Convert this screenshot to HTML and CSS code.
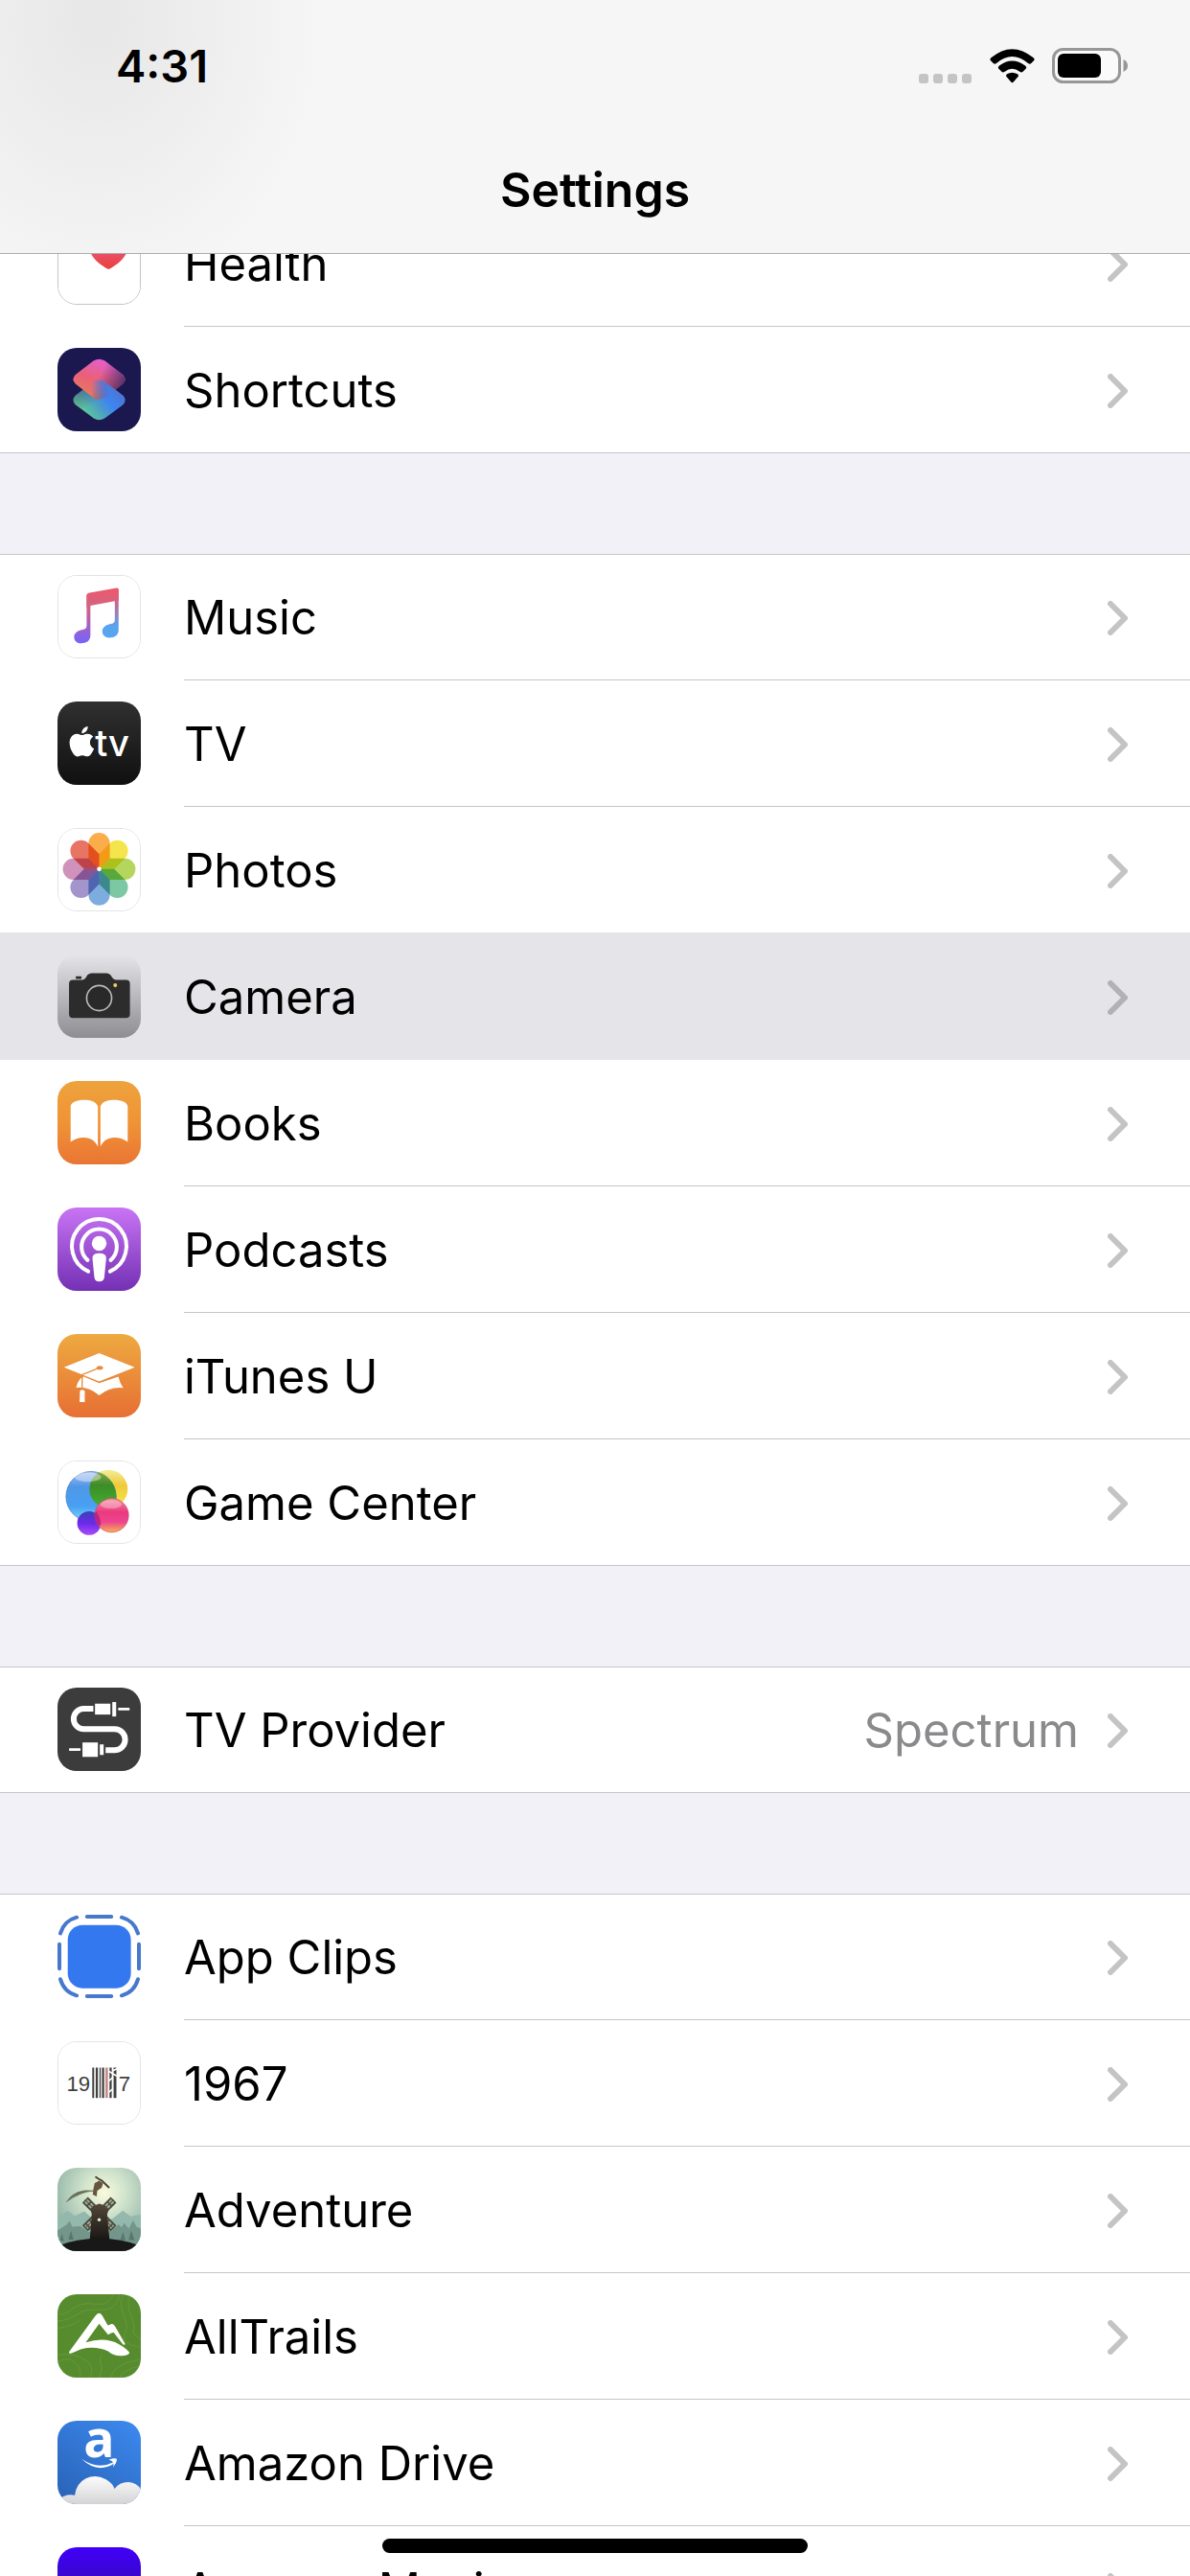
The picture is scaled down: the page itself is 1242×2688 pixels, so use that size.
FILE: index.html
```html
<!DOCTYPE html>
<html lang="en">
<head>
  <meta charset="UTF-8">
  <meta name="viewport" content="width=device-width, initial-scale=1">
  <title>Settings</title>
  <link rel="stylesheet" href="styles.css">
</head>
<body>

  <svg class="defs" aria-hidden="true">
    <symbol id="chevron" viewBox="0 0 21 36">
      <path d="M3 3 L18 18 L3 33" fill="none" stroke="currentColor" stroke-width="6" stroke-linecap="round" stroke-linejoin="round"/>
    </symbol>
  </svg>

  <header class="top">
    <div class="status">
      <span class="time">4:31</span>
      <div class="status-icons">
        <svg class="signal" viewBox="0 0 56 10" aria-hidden="true">
          <g fill="#c4c4c4">
            <rect x="0" width="10" height="10" rx="3"/>
            <rect x="15" width="10" height="10" rx="3"/>
            <rect x="30" width="10" height="10" rx="3"/>
            <rect x="45" width="10" height="10" rx="3"/>
          </g>
        </svg>
        <svg class="wifi" viewBox="0 0 141 108" aria-hidden="true">
          <path d="M4 28 Q70 -27 137 28 Q142 33 138 37 L129 46 Q125 49 120 45 Q70 3 21 45 Q16 49 12 46 L3 37 Q-1 33 4 28Z"/>
          <path d="M29 53 Q70 22 112 53 Q117 58 113 62 L103 72 Q99 75 94 71 Q70 53 47 71 Q42 75 38 72 L28 62 Q24 58 29 53Z"/>
          <path d="M54 79 Q70 69 87 79 Q92 83 88 88 L75 103 Q70 109 66 103 L53 88 Q49 83 54 79Z"/>
        </svg>
        <svg class="battery" viewBox="0 0 79 37" aria-hidden="true">
          <rect x="1.500" y="1.500" width="69" height="34" rx="10" fill="#fafafa" stroke="#979797" stroke-width="3"/>
          <rect x="6" y="6" width="45" height="25" rx="6"/>
          <path d="M74.500 12 Q79 14 79 18.500 Q79 23 74.500 25Z" fill="#979797"/>
        </svg>
      </div>
    </div>
    <h1 class="title">Settings</h1>
  </header>

  <main class="settings">
    <ul class="group first">
      <li><a class="row" href="#health">
        <svg class="icon outlined dark-line" viewBox="0 0 260 260" aria-hidden="true">
          <defs><linearGradient id="heart" x2="0" y2="1"><stop stop-color="#f0609a"/><stop offset="1" stop-color="#e8403a"/></linearGradient></defs>
          <rect width="260" height="260" fill="#fff"/>
          <path d="M160 150 C120 130 96 100 96 70 C96 36 140 28 160 58 C180 28 224 36 224 70 C224 100 200 130 160 150Z" fill="url(#heart)"/>
        </svg>
        <span class="body"><span class="name">Health</span><svg class="chevron"><use href="#chevron"/></svg></span>
      </a></li>
      <li><a class="row" href="#shortcuts">
        <svg class="icon" viewBox="0 0 260 260" aria-hidden="true">
          <defs>
            <linearGradient id="sc-low" gradientUnits="userSpaceOnUse" x1="80" y1="210" x2="180" y2="130"><stop stop-color="#62cf90"/><stop offset="0.450" stop-color="#4a9cc8"/><stop offset="0.700" stop-color="#3d84f2"/><stop offset="1" stop-color="#4a78d8"/></linearGradient>
            <linearGradient id="sc-shade" x1="0" y1="0" x2="0.400" y2="0.600"><stop stop-color="#44506e" stop-opacity="0.900"/><stop offset="1" stop-color="#44506e" stop-opacity="0"/></linearGradient>
            <linearGradient id="sc-high" gradientUnits="userSpaceOnUse" x1="140" y1="35" x2="100" y2="150"><stop stop-color="#e35fd0"/><stop offset="0.550" stop-color="#ea6078"/><stop offset="1" stop-color="#e87860"/></linearGradient>
            <linearGradient id="sc-dark" gradientUnits="userSpaceOnUse" x1="135" y1="80" x2="205" y2="115"><stop stop-color="#4a2c66" stop-opacity="0"/><stop offset="1" stop-color="#4a2c66" stop-opacity="0.900"/></linearGradient>
            <linearGradient id="sc-fade" gradientUnits="userSpaceOnUse" x1="105" y1="140" x2="160" y2="130"><stop stop-color="#000"/><stop offset="1" stop-color="#fff"/></linearGradient>
            <mask id="sc-mask" maskUnits="userSpaceOnUse" x="0" y="0" width="260" height="260"><rect width="260" height="260" fill="url(#sc-fade)"/></mask>
          </defs>
          <rect width="260" height="260" fill="#1b1850"/>
          <path d="M112 105 Q130 95 148 105 L204 149 Q218 163 204 177 L148 219 Q130 231 112 219 L56 177 Q42 163 56 149Z" fill="url(#sc-low)"/>
          <path d="M112 105 Q130 95 148 105 L204 149 Q218 163 204 177 L148 219 Q130 231 112 219 L56 177 Q42 163 56 149Z" fill="url(#sc-shade)"/>
          <path d="M112 40 Q130 30 148 40 L204 84 Q218 98 204 112 L148 156 Q130 166 112 156 L56 112 Q42 98 56 84Z" fill="url(#sc-high)"/>
          <path d="M112 40 Q130 30 148 40 L204 84 Q218 98 204 112 L148 156 Q130 166 112 156 L56 112 Q42 98 56 84Z" fill="url(#sc-dark)"/>
          <path d="M112 105 Q130 95 148 105 L204 149 Q218 163 204 177 L148 219 L130 162 L100 140Z" fill="url(#sc-low)" mask="url(#sc-mask)"/>
        </svg>
        <span class="body"><span class="name">Shortcuts</span><svg class="chevron"><use href="#chevron"/></svg></span>
      </a></li>
    </ul>

    <ul class="group">
      <li><a class="row" href="#music">
        <svg class="icon outlined" viewBox="0 0 260 260" aria-hidden="true">
          <defs>
            <linearGradient id="note-l" gradientUnits="userSpaceOnUse" x1="0" y1="50" x2="0" y2="215"><stop stop-color="#f0586c"/><stop offset="0.300" stop-color="#d8607f"/><stop offset="1" stop-color="#7463ff"/></linearGradient>
            <linearGradient id="note-r" gradientUnits="userSpaceOnUse" x1="0" y1="40" x2="0" y2="190"><stop stop-color="#f0586c"/><stop offset="0.300" stop-color="#c8688f"/><stop offset="0.800" stop-color="#58a4ee"/></linearGradient>
            <linearGradient id="note-beam" x2="0" y2="1"><stop stop-color="#f0566a"/><stop offset="1" stop-color="#cf6684"/></linearGradient>
          </defs>
          <rect width="260" height="260" fill="#fff"/>
          <path d="M90 60 H102 V190 C102 207 90 215 72 215 C58 215 50 206 50 195 C50 183 60 175 74 172 C84 170 90 168 90 158Z" fill="url(#note-l)"/>
          <path d="M180 42 H192 V172 C192 189 180 197 162 197 C148 197 140 188 140 177 C140 165 150 157 164 154 C174 152 180 150 180 140Z" fill="url(#note-r)"/>
          <path d="M90 61 Q90 56 96 54 L186 38 Q192 37 192 43 V78 L102 95 L90 100Z" fill="url(#note-beam)"/>
        </svg>
        <span class="body"><span class="name">Music</span><svg class="chevron"><use href="#chevron"/></svg></span>
      </a></li>
      <li><a class="row" href="#tv">
        <svg class="icon" viewBox="0 0 260 260" aria-hidden="true">
          <defs><linearGradient id="tv-bg" x2="0" y2="1"><stop stop-color="#303030"/><stop offset="1" stop-color="#101010"/></linearGradient></defs>
          <rect width="260" height="260" fill="url(#tv-bg)"/>
          <path transform="translate(29 78) scale(3.900)" fill="#fff" d="M12.152 6.896c-.948 0-2.415-1.078-3.960-1.040-2.040.027-3.910 1.183-4.961 3.014-2.117 3.675-.546 9.103 1.519 12.090 1.013 1.454 2.208 3.090 3.792 3.039 1.520-.065 2.090-.987 3.935-.987 1.831 0 2.350.987 3.960.948 1.637-.026 2.676-1.480 3.676-2.948 1.156-1.688 1.636-3.325 1.662-3.415-.039-.013-3.182-1.221-3.220-4.857-.026-3.040 2.480-4.494 2.597-4.559-1.429-2.090-3.623-2.324-4.390-2.376-2-.156-3.675 1.090-4.610 1.090zM15.530 3.830c.843-1.012 1.400-2.427 1.245-3.830-1.207.052-2.662.805-3.532 1.818-.780.896-1.454 2.338-1.273 3.714 1.338.104 2.715-.688 3.559-1.701"/>
          <text class="tv-text" x="117" y="171">tv</text>
        </svg>
        <span class="body"><span class="name">TV</span><svg class="chevron"><use href="#chevron"/></svg></span>
      </a></li>
      <li><a class="row" href="#photos">
        <svg class="icon outlined" viewBox="0 0 260 260" aria-hidden="true">
          <rect width="260" height="260" fill="#fff"/>
          <g class="petals">
            <path d="M96 46 A34 34 0 0 1 164 46 V94 L130 128 L96 94Z" fill="#fbad4c"/>
            <path transform="rotate(45 130 128)" d="M96 46 A34 34 0 0 1 164 46 V94 L130 128 L96 94Z" fill="#f5e54c"/>
            <path transform="rotate(90 130 128)" d="M96 46 A34 34 0 0 1 164 46 V94 L130 128 L96 94Z" fill="#b4d65c"/>
            <path transform="rotate(135 130 128)" d="M96 46 A34 34 0 0 1 164 46 V94 L130 128 L96 94Z" fill="#7cc8a2"/>
            <path transform="rotate(180 130 128)" d="M96 46 A34 34 0 0 1 164 46 V94 L130 128 L96 94Z" fill="#7cadde"/>
            <path transform="rotate(225 130 128)" d="M96 46 A34 34 0 0 1 164 46 V94 L130 128 L96 94Z" fill="#a395cc"/>
            <path transform="rotate(270 130 128)" d="M96 46 A34 34 0 0 1 164 46 V94 L130 128 L96 94Z" fill="#d092ba"/>
            <path transform="rotate(315 130 128)" d="M96 46 A34 34 0 0 1 164 46 V94 L130 128 L96 94Z" fill="#e87464"/>
          </g>
          <circle cx="130" cy="128" r="7" fill="#fff"/>
        </svg>
        <span class="body"><span class="name">Photos</span><svg class="chevron"><use href="#chevron"/></svg></span>
      </a></li>
      <li><a class="row selected" href="#camera">
        <svg class="icon" viewBox="0 0 260 260" aria-hidden="true">
          <defs><linearGradient id="cam-bg" x2="0" y2="1"><stop stop-color="#e5e5e9"/><stop offset="1" stop-color="#8e8d92"/></linearGradient></defs>
          <rect width="260" height="260" fill="url(#cam-bg)"/>
          <rect x="57" y="68" width="18" height="8" rx="2" fill="#2c2c2d"/>
          <path d="M48 79 H76 Q86 79 91 68 Q96 58 106 58 H154 Q163 58 168 68 Q174 79 184 79 H214 Q226 79 226 91 V186 Q226 198 214 198 H48 Q36 198 36 186 V91 Q36 79 48 79Z" fill="#2c2c2d"/>
          <circle cx="130" cy="136" r="39" fill="#29292a" stroke="#b9b9ba" stroke-width="5"/>
          <circle cx="180" cy="96" r="6" fill="#f2c764"/>
        </svg>
        <span class="body"><span class="name">Camera</span><svg class="chevron"><use href="#chevron"/></svg></span>
      </a></li>
      <li><a class="row" href="#books">
        <svg class="icon" viewBox="0 0 260 260" aria-hidden="true">
          <defs><linearGradient id="books-bg" x2="0" y2="1"><stop stop-color="#eda33c"/><stop offset="0.500" stop-color="#f09336"/><stop offset="1" stop-color="#e97534"/></linearGradient></defs>
          <rect width="260" height="260" fill="url(#books-bg)"/>
          <g fill="#fff">
            <path d="M126 79 C120 64 103 59 83 59 C62 59 41 66 41 80 V190 C54 179 68 176 82 176 C103 176 119 187 126 205Z"/>
            <path d="M134 79 C140 64 157 59 177 59 C198 59 219 66 219 80 V190 C206 179 192 176 178 176 C157 176 141 187 134 205Z"/>
          </g>
        </svg>
        <span class="body"><span class="name">Books</span><svg class="chevron"><use href="#chevron"/></svg></span>
      </a></li>
      <li><a class="row" href="#podcasts">
        <svg class="icon" viewBox="0 0 260 260" aria-hidden="true">
          <defs><linearGradient id="pod-bg" x2="0" y2="1"><stop stop-color="#c874f4"/><stop offset="1" stop-color="#7430b4"/></linearGradient></defs>
          <rect width="260" height="260" fill="url(#pod-bg)"/>
          <g fill="none" stroke="#fff" stroke-width="12" stroke-linecap="round">
            <path d="M96 199 A85 85 0 1 1 164 199"/>
            <path d="M94 164 A55 55 0 1 1 166 164"/>
          </g>
          <circle cx="130" cy="112" r="23" fill="#fff"/>
          <path d="M109 158 Q109 143 130 143 Q152 143 152 158 L146 218 Q144 231 130 231 Q117 231 115 218Z" fill="#fff"/>
        </svg>
        <span class="body"><span class="name">Podcasts</span><svg class="chevron"><use href="#chevron"/></svg></span>
      </a></li>
      <li><a class="row" href="#itunes-u">
        <svg class="icon" viewBox="0 0 260 260" aria-hidden="true">
          <defs><linearGradient id="itu-bg" x2="0" y2="1"><stop stop-color="#eeaa40"/><stop offset="1" stop-color="#e76f34"/></linearGradient></defs>
          <rect width="260" height="260" fill="url(#itu-bg)"/>
          <path d="M20 104 L130 60 L241 104 L130 148Z" fill="#fff"/>
          <path d="M72 138 L82 133 L130 153 L190 133 Q194 153 205 168 Q165 163 130 191 Q98 163 58 167 Q62 150 72 138Z" fill="#fff"/>
          <path d="M132 105 L77 127 V174" fill="none" stroke="#e58c3a" stroke-width="4"/>
          <ellipse cx="132" cy="105" rx="10" ry="6" fill="#e58c3a"/>
          <path d="M70 178 Q77 170 85 178 V212 H69Z" fill="#fff"/>
        </svg>
        <span class="body"><span class="name">iTunes U</span><svg class="chevron"><use href="#chevron"/></svg></span>
      </a></li>
      <li><a class="row" href="#game-center">
        <svg class="icon outlined" viewBox="0 0 260 260" aria-hidden="true">
          <defs>
            <linearGradient id="gc-blue" x2="0" y2="1"><stop stop-color="#a9bff0"/><stop offset="0.300" stop-color="#4f97e6"/><stop offset="0.700" stop-color="#48a0f4"/><stop offset="1" stop-color="#7fdcf5"/></linearGradient>
            <linearGradient id="gc-yellow" x2="0" y2="1"><stop stop-color="#f3ee9a"/><stop offset="0.400" stop-color="#efc93a"/><stop offset="1" stop-color="#f6ea4e"/></linearGradient>
            <linearGradient id="gc-green" x2="0" y2="1"><stop stop-color="#8fae50"/><stop offset="0.400" stop-color="#3c8c28"/><stop offset="1" stop-color="#45b030"/></linearGradient>
            <linearGradient id="gc-pink" x2="0" y2="1"><stop stop-color="#f58fa0"/><stop offset="0.400" stop-color="#ea3a7e"/><stop offset="0.700" stop-color="#ee4590"/><stop offset="1" stop-color="#f6b44c"/></linearGradient>
            <linearGradient id="gc-purple" x2="0" y2="1"><stop stop-color="#3c40b8"/><stop offset="0.500" stop-color="#6a2ae8"/><stop offset="1" stop-color="#a94cf8"/></linearGradient>
            <clipPath id="gc-clip"><circle cx="104" cy="112" r="81"/></clipPath>
          </defs>
          <rect width="260" height="260" fill="#fff"/>
          <circle cx="160" cy="88" r="61" fill="url(#gc-yellow)"/>
          <circle cx="104" cy="112" r="80" fill="url(#gc-blue)" stroke="#3f78c0" stroke-width="2"/>
          <circle cx="160" cy="88" r="61" fill="url(#gc-green)" clip-path="url(#gc-clip)"/>
          <ellipse cx="94" cy="50" rx="42" ry="15" fill="#fff" opacity="0.400"/>
          <circle cx="98" cy="197" r="38" fill="url(#gc-purple)"/>
          <circle cx="170" cy="172" r="54" fill="url(#gc-pink)" stroke="#c84868" stroke-width="2"/>
          <ellipse cx="168" cy="137" rx="34" ry="14" fill="#fff" opacity="0.300"/>
          <path d="M128 207 Q110 183 119 158 Q133 172 136 203Z" fill="#a8187c" opacity="0.700"/>
        </svg>
        <span class="body"><span class="name">Game Center</span><svg class="chevron"><use href="#chevron"/></svg></span>
      </a></li>
    </ul>

    <ul class="group">
      <li><a class="row" href="#tv-provider">
        <svg class="icon" viewBox="0 0 260 260" aria-hidden="true">
          <rect width="260" height="260" fill="#3c3c3c"/>
          <path d="M112 66 H82 A31 31 0 0 0 82 129 H178 A32 32 0 0 1 178 195 H150" fill="none" stroke="#fff" stroke-width="18"/>
          <g fill="#fff">
            <rect x="117" y="50" width="48" height="34"/>
            <rect x="171" y="45" width="12" height="45"/>
            <rect x="189" y="63" width="36" height="8" rx="2"/>
            <rect x="78" y="171" width="48" height="45"/>
            <rect x="132" y="177" width="12" height="33"/>
            <rect x="36" y="189" width="36" height="8" rx="2"/>
          </g>
        </svg>
        <span class="body"><span class="name">TV Provider</span><span class="value">Spectrum</span><svg class="chevron"><use href="#chevron"/></svg></span>
      </a></li>
    </ul>

    <ul class="group">
      <li><a class="row" href="#app-clips">
        <svg class="icon square" viewBox="0 0 260 260" aria-hidden="true">
          <rect x="32" y="32" width="197" height="197" rx="46" fill="#3478f0"/>
          <g fill="none" stroke="#4678cc" stroke-width="12" stroke-linecap="round">
            <path d="M92 6 H168 M92 254 H168 M6 92 V168 M254 92 V168"/>
            <path d="M9 58 Q20 19 60 8 M200 8 Q240 19 251 58 M251 201 Q240 241 200 252 M60 252 Q20 241 9 201"/>
          </g>
        </svg>
        <span class="body"><span class="name">App Clips</span><svg class="chevron"><use href="#chevron"/></svg></span>
      </a></li>
      <li><a class="row" href="#1967">
        <svg class="icon outlined" viewBox="0 0 260 260" aria-hidden="true">
          <rect width="260" height="260" fill="#fff"/>
          <text class="narrow-text" x="26" y="155">19</text>
          <text class="narrow-text" x="192" y="155">7</text>
          <g fill="#40403e">
            <rect x="108" y="81" width="6" height="97"/>
            <rect x="119" y="81" width="7" height="97"/>
            <rect x="131" y="81" width="4" height="97"/>
            <rect x="139" y="81" width="7" height="97"/>
            <rect x="163" y="81" width="7" height="97"/>
            <rect x="176" y="81" width="9" height="97"/>
          </g>
          <rect x="150" y="81" width="8" height="97" fill="#c48a8c"/>
          <path d="M160 92 L186 108 M160 124 L174 112 M172 92 L188 84 M160 160 L172 150" stroke="#fff" stroke-width="5"/>
        </svg>
        <span class="body"><span class="name">1967</span><svg class="chevron"><use href="#chevron"/></svg></span>
      </a></li>
      <li><a class="row" href="#adventure">
        <svg class="icon" viewBox="0 0 260 260" aria-hidden="true">
          <defs>
            <radialGradient id="adv-sky" cx="0.560" cy="0.300" r="0.750"><stop stop-color="#fbfbdc"/><stop offset="0.350" stop-color="#cfe3cc"/><stop offset="1" stop-color="#7fa59b"/></radialGradient>
            <linearGradient id="adv-mill" x2="0" y2="1"><stop stop-color="#54483a"/><stop offset="1" stop-color="#151312"/></linearGradient>
          </defs>
          <rect width="260" height="260" fill="url(#adv-sky)"/>
          <path d="M0 156 L32 134 L54 150 L84 136 L110 160 H170 L204 134 L228 152 L260 146 V260 H0Z" fill="#94b9ac"/>
          <path d="M0 196 L28 178 L38 166 L46 184 L72 182 L96 200 L170 196 L190 176 L200 186 L208 172 L222 190 L236 164 L246 184 L260 190 V260 H0Z" fill="#74958a"/>
          <path d="M8 228 L14 204 L20 228 M34 224 L42 196 L50 224 M196 226 L204 200 L212 226 M222 226 L230 196 L240 226" fill="#56776e"/>
          <path d="M86 100 L175 189 M175 100 L86 189" stroke="#4c4a3e" stroke-width="25"/>
          <path d="M89 103 L172 186 M172 103 L89 186" stroke="#a2b198" stroke-width="14" stroke-dasharray="11 5"/>
          <path d="M86 100 L175 189 M175 100 L86 189" stroke="#4c4a3e" stroke-width="3"/>
          <path d="M104 134 Q106 118 131 112 Q155 118 159 134 L155 144 L163 232 H100 L107 144Z" fill="url(#adv-mill)"/>
          <circle cx="130" cy="162" r="5" fill="#e6f0d8"/>
          <path d="M0 244 Q60 221 130 220 Q200 221 260 244 V260 H0Z" fill="#171817"/>
          <path d="M28 106 Q56 64 112 72 Q74 74 28 106Z" fill="#687258" stroke="#687258" stroke-width="2"/>
          <path d="M112 66 L116 48 L130 40 L142 48 L138 62 L124 72 L122 90 L110 84Z" fill="#65563e"/>
          <path d="M120 29 Q126 34 138 40 L160 61" fill="none" stroke="#4f4535" stroke-width="6" stroke-linecap="round"/>
        </svg>
        <span class="body"><span class="name">Adventure</span><svg class="chevron"><use href="#chevron"/></svg></span>
      </a></li>
      <li><a class="row" href="#alltrails">
        <svg class="icon" viewBox="0 0 260 260" aria-hidden="true">
          <rect width="260" height="260" fill="#578c2e"/>
          <g fill="none" stroke="#6b9d45" stroke-width="2">
            <path d="M0 62 C40 70 50 20 110 30 S170 0 176 0 M0 84 C60 80 60 44 120 48 S184 30 194 0 M0 106 C36 100 50 96 70 80"/>
            <path d="M206 0 C180 50 230 80 212 120 S250 160 260 166 M228 0 C204 50 250 80 236 120 L260 142"/>
            <path d="M0 214 C40 180 80 226 70 260 M0 190 C60 180 130 210 100 260 M130 260 C150 220 120 200 140 190 M166 260 C176 226 210 210 260 204 M194 260 C204 240 230 228 260 224"/>
          </g>
          <path d="M36 180 L116 70 Q130 49 141 69 L157 97 L169 93 Q175 92 180 101 L211 155 Q210 160 204 156 L175 119 L166 122 L158 126 L130 92 L88 150 Q150 132 192 156 Q214 168 224 181 Q226 191 202 192 Q176 194 158 178 Q120 160 74 171 L44 184 Q35 187 36 180Z" fill="#fff"/>
        </svg>
        <span class="body"><span class="name">AllTrails</span><svg class="chevron"><use href="#chevron"/></svg></span>
      </a></li>
      <li><a class="row" href="#amazon-drive">
        <svg class="icon" viewBox="0 0 260 260" aria-hidden="true">
          <defs>
            <linearGradient id="drive-bg" x1="1" x2="0.300" y2="1"><stop stop-color="#3c8af0"/><stop offset="1" stop-color="#2b66bc"/></linearGradient>
            <linearGradient id="cloud" x2="0" y2="1"><stop stop-color="#fcfcfc"/><stop offset="1" stop-color="#d4d4d6"/></linearGradient>
          </defs>
          <rect width="260" height="260" fill="url(#drive-bg)"/>
          <text class="drive-text" x="130" y="114">a</text>
          <path d="M75 119 Q126 154 173 130 L176 134 Q124 166 75 119Z" fill="#fff"/>
          <path d="M160 122 Q178 115 185 119 Q186 130 173 145 Q180 126 160 122Z" fill="#fff"/>
          <path d="M0 248 Q24 226 54 232 Q58 196 88 180 Q120 166 150 182 Q172 194 178 212 Q194 190 222 191 Q248 193 260 214 V260 H0Z" fill="url(#cloud)"/>
        </svg>
        <span class="body"><span class="name">Amazon Drive</span><svg class="chevron"><use href="#chevron"/></svg></span>
      </a></li>
      <li><a class="row" href="#amazon-music">
        <svg class="icon" viewBox="0 0 260 260" aria-hidden="true">
          <defs><linearGradient id="am-bg" x2="0" y2="1"><stop stop-color="#4000fa"/><stop offset="0.400" stop-color="#3808c8"/><stop offset="1" stop-color="#2c0a90"/></linearGradient></defs>
          <rect width="260" height="260" fill="url(#am-bg)"/>
        </svg>
        <span class="body"><span class="name">Amazon Music</span><svg class="chevron"><use href="#chevron"/></svg></span>
      </a></li>
    </ul>
  </main>

  <div class="home-indicator"></div>

</body>
</html>
```
FILE: styles.css
```css
* {
  box-sizing: border-box;
}

body {
  margin: 0;
  height: 100vh;
  overflow: hidden;
  display: flex;
  flex-direction: column;
  background-color: #f2f1f7;
  color: #000;
  font-family: Inter, "Liberation Sans", sans-serif;
  font-size: 49px;
}

.defs {
  position: absolute;
  width: 0;
  height: 0;
}

/* status bar + title */
.top {
  flex: none;
  background: radial-gradient(ellipse 240px 300px at 100px 20px, #e7e7e8, #efeff0 55%, #f6f6f6) #f6f6f6;
  border-bottom: 1px solid #adadad;
}

.status {
  display: flex;
  justify-content: space-between;
  align-items: center;
  height: 132px;
  padding: 4px 65px 0 121px;
}

.time {
  font-size: 47px;
  font-weight: 600;
}

.status-icons {
  display: flex;
  align-items: flex-end;
  gap: 18px;
}

.signal {
  width: 56px;
  height: 10px;
}

.wifi {
  width: 47px;
  height: 36px;
}

.battery {
  width: 79px;
  height: 37px;
}

.title {
  margin: 0;
  height: 132px;
  line-height: 132px;
  font-size: 50px;
  font-weight: 600;
  text-align: center;
}

/* list */
.settings {
  flex: 1;
  min-height: 0;
  overflow: hidden;
}

.group {
  margin: 0 0 105px;
  padding: 0;
  list-style: none;
  background-color: #fff;
}

/* scrolled part way under the header */
.group.first {
  margin-top: -56px;
}

.row {
  display: flex;
  align-items: flex-start;
  gap: 45px;
  height: 132px;
  padding-left: 60px;
  color: inherit;
  text-decoration: none;
}

.group li:first-child .row {
  box-shadow: inset 0 1px #c6c6c8;
}

.group li:last-child .row {
  box-shadow: inset 0 -1px #c6c6c8;
}

.group li:only-child .row {
  box-shadow: inset 0 1px #c6c6c8, inset 0 -1px #c6c6c8;
}

.body {
  flex: 1;
  align-self: stretch;
  display: flex;
  align-items: center;
  gap: 30px;
  padding-top: 2px;
  padding-right: 65px;
  border-bottom: 1px solid #c6c6c8;
}

.name {
  flex: 1;
}

.value {
  color: #8a8a8d;
}

.chevron {
  width: 21px;
  height: 36px;
  color: #c4c4c6;
}

.row.selected {
  position: relative;
  background-color: #e5e4e9;
  box-shadow: 0 -1px #e5e4e9;
}

.selected .body {
  border-color: transparent;
}

.selected .chevron {
  color: #b2b2b6;
}

/* app icons */
.icon {
  flex: none;
  width: 87px;
  height: 87px;
  margin-top: 22px;
  border-radius: 20px;
  isolation: isolate;
}

.icon.outlined {
  border: 1px solid #e4e4e6;
}

.icon.dark-line {
  border-color: #c4c4c6;
}

.icon.square {
  border-radius: 0;
}

.petals path {
  mix-blend-mode: multiply;
}

.tv-text {
  font-size: 114px;
  font-weight: 500;
  fill: #fff;
}

.narrow-text {
  font-family: "Liberation Sans", sans-serif;
  font-size: 68px;
  fill: #40403e;
}

.drive-text {
  font-family: "Open Sans", "Noto Sans", sans-serif;
  font-size: 160px;
  font-weight: 700;
  text-anchor: middle;
  fill: #fff;
}

.home-indicator {
  position: fixed;
  left: 50%;
  bottom: 24px;
  width: 444px;
  height: 15px;
  border-radius: 8px;
  background-color: #000;
  transform: translateX(-50%);
}
```
